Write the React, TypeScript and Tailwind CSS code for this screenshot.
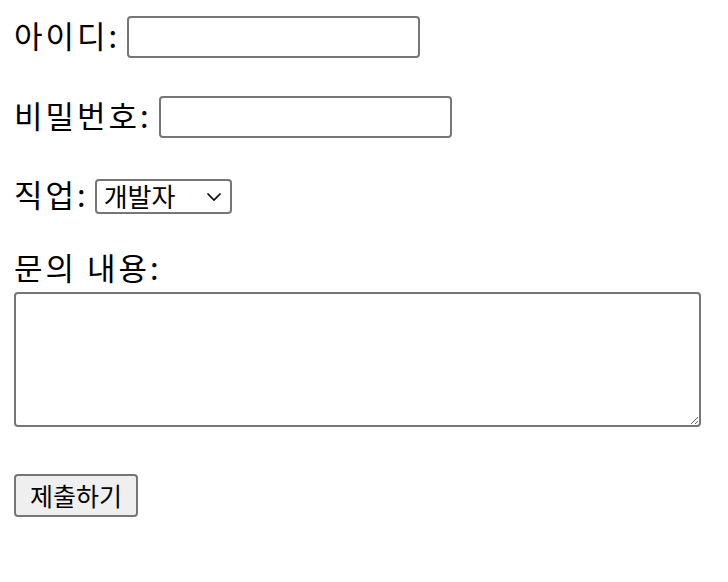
export default function App() {
  const label = "pb-[6px] text-[31px] leading-none tracking-[3px] text-black font-['Noto_Sans_CJK_KR',serif]";
  const sans = "font-['Noto_Sans_CJK_KR',sans-serif]";
  return (
    <div className="w-[728px] h-[582px] bg-white px-[14px] pt-[16px]">
      <div className="flex items-center h-[42px]">
        <span className={label}>아이디:</span>
        <input type="text" className="ml-[7px] w-[293px] h-[42px] border-2 border-[#767676] rounded-[4px] bg-white" />
      </div>
      <div className="flex items-center h-[42px] mt-[38px]">
        <span className={label}>비밀번호:</span>
        <input type="password" className="ml-[7px] w-[293px] h-[42px] border-2 border-[#767676] rounded-[4px] bg-white" />
      </div>
      <div className="flex items-center h-[42px] mt-[37px]">
        <span className={label}>직업:</span>
        <div className="relative ml-[6px]">
          <select className={`appearance-none w-[137px] h-[35px] border-2 border-[#767676] rounded-[4px] bg-white pl-[7px] text-[26px] leading-none text-black ${sans}`} defaultValue="dev">
            <option value="dev">개발자</option>
            <option value="design">디자이너</option>
          </select>
          <svg className="absolute right-[10px] top-[13px] pointer-events-none" width="16" height="10" viewBox="0 0 16 10" fill="none">
            <path d="M1.5 1.5 L8 8 L14.5 1.5" stroke="#000" strokeWidth="1.6" />
          </svg>
        </div>
      </div>
      <div className="flex items-center h-[42px] mt-[31px]">
        <span className={label}>문의 내용:</span>
      </div>
      <textarea className="block mt-[2px] w-[687px] h-[135px] border-2 border-[#767676] rounded-[4px] bg-white resize" />
      <button className={`block mt-[47px] w-[124px] h-[43px] border-2 border-[#767676] rounded-[4px] bg-[#efefef] text-[25px] leading-none text-black ${sans}`}>
        제출하기
      </button>
    </div>
  );
}
